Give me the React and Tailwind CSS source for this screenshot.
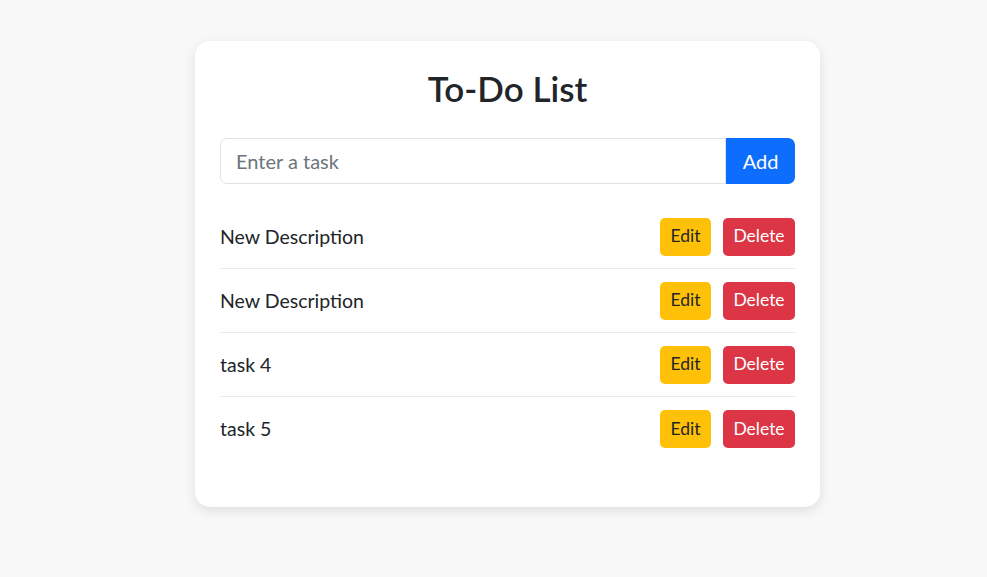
import React from "react";

const tasks = ["New Description", "New Description", "task 4", "task 5"];

export default function App() {
  return (
    <div
      className="min-h-[577px] w-full bg-[#f8f8f8] pt-[41px] pl-[28px] text-[#212529]"
      style={{ fontFamily: "Lato, 'Noto Sans', sans-serif" }}
    >
      <div className="mx-auto w-[625px] rounded-[15px] bg-white px-[25px] pt-[25px] pb-[46px] shadow-[0_4px_12px_rgba(0,0,0,0.1)]">
        <h1 className="text-center text-[35px] font-semibold leading-[44px]">To-Do List</h1>
        <div className="mt-[28px] flex h-[46px]">
          <input
            className="min-w-0 flex-1 rounded-l-[7px] border border-[#dee2e6] px-[15px] text-[20px] text-[#212529] outline-none placeholder:text-[#6c757d]"
            placeholder="Enter a task"
          />
          <button className="w-[69px] rounded-r-[7px] bg-[#0d6efd] text-[20px] text-white">Add</button>
        </div>
        <ul className="mt-[21px]">
          {tasks.map((t, i) => (
            <li
              key={i}
              className={
                "flex h-[64px] items-center justify-between " +
                (i < tasks.length - 1 ? "border-b border-[#e9ecef]" : "")
              }
            >
              <span className="text-[19.5px]">{t}</span>
              <div className="flex gap-[12px]">
                <button className="h-[38px] w-[51px] rounded-[5px] bg-[#ffc107] text-[17.5px] text-[#212529]">Edit</button>
                <button className="h-[38px] w-[72px] rounded-[5px] bg-[#dc3545] text-[17.5px] text-white">Delete</button>
              </div>
            </li>
          ))}
        </ul>
      </div>
    </div>
  );
}
